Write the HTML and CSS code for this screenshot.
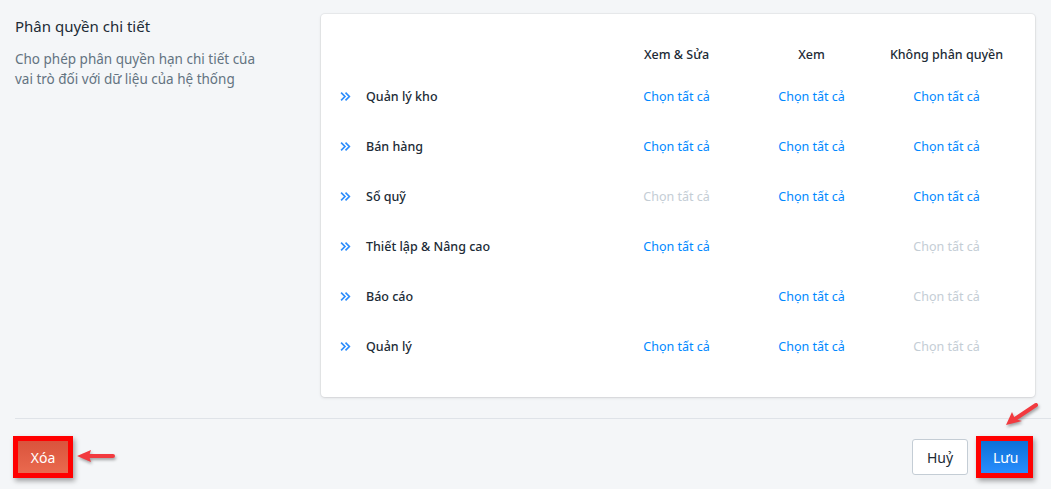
FILE: index.html
```html
<html lang="vi">
	<head>
		<meta charset="UTF-8">
		<meta name="viewport" content="width=device-width, initial-scale=1.0">
		<title>Phân quyền chi tiết</title>
		<link rel="stylesheet" href="styles.css">
	</head>
	<body>
		<div class="layout">
			<div class="aside">
				<h2 class="aside-title">Phân quyền chi tiết</h2>
				<p class="aside-desc">Cho phép phân quyền hạn chi tiết của vai trò đối với dữ liệu của hệ thống</p>
			</div>
			<div class="card">
				<div class="perm-row perm-head">
					<div class="perm-name"></div>
					<div class="perm-col">Xem &amp; Sửa</div>
					<div class="perm-col">Xem</div>
					<div class="perm-col">Không phân quyền</div>
				</div>
				<div class="perm-row">
					<div class="perm-name"><svg class="chev" viewBox="0 0 10 10"><polyline points="1,1.5 4.5,5 1,8.5"/><polyline points="5,1.5 8.5,5 5,8.5"/></svg>Quản lý kho</div>
					<a class="perm-col link" href="#">Chọn tất cả</a>
					<a class="perm-col link" href="#">Chọn tất cả</a>
					<a class="perm-col link" href="#">Chọn tất cả</a>
				</div>
				<div class="perm-row">
					<div class="perm-name"><svg class="chev" viewBox="0 0 10 10"><polyline points="1,1.5 4.5,5 1,8.5"/><polyline points="5,1.5 8.5,5 5,8.5"/></svg>Bán hàng</div>
					<a class="perm-col link" href="#">Chọn tất cả</a>
					<a class="perm-col link" href="#">Chọn tất cả</a>
					<a class="perm-col link" href="#">Chọn tất cả</a>
				</div>
				<div class="perm-row">
					<div class="perm-name"><svg class="chev" viewBox="0 0 10 10"><polyline points="1,1.5 4.5,5 1,8.5"/><polyline points="5,1.5 8.5,5 5,8.5"/></svg>Sổ quỹ</div>
					<span class="perm-col link disabled">Chọn tất cả</span>
					<a class="perm-col link" href="#">Chọn tất cả</a>
					<a class="perm-col link" href="#">Chọn tất cả</a>
				</div>
				<div class="perm-row">
					<div class="perm-name"><svg class="chev" viewBox="0 0 10 10"><polyline points="1,1.5 4.5,5 1,8.5"/><polyline points="5,1.5 8.5,5 5,8.5"/></svg>Thiết lập &amp; Nâng cao</div>
					<a class="perm-col link" href="#">Chọn tất cả</a>
					<span class="perm-col"></span>
					<span class="perm-col link disabled">Chọn tất cả</span>
				</div>
				<div class="perm-row">
					<div class="perm-name"><svg class="chev" viewBox="0 0 10 10"><polyline points="1,1.5 4.5,5 1,8.5"/><polyline points="5,1.5 8.5,5 5,8.5"/></svg>Báo cáo</div>
					<span class="perm-col"></span>
					<a class="perm-col link" href="#">Chọn tất cả</a>
					<span class="perm-col link disabled">Chọn tất cả</span>
				</div>
				<div class="perm-row">
					<div class="perm-name"><svg class="chev" viewBox="0 0 10 10"><polyline points="1,1.5 4.5,5 1,8.5"/><polyline points="5,1.5 8.5,5 5,8.5"/></svg>Quản lý</div>
					<a class="perm-col link" href="#">Chọn tất cả</a>
					<a class="perm-col link" href="#">Chọn tất cả</a>
					<span class="perm-col link disabled">Chọn tất cả</span>
				</div>
			</div>
		</div>

		<div class="footer">
			<button class="btn btn-danger marked" type="button">Xóa</button>
			<div class="footer-right">
				<button class="btn btn-default" type="button">Huỷ</button>
				<button class="btn btn-primary marked" type="button">Lưu</button>
			</div>
		</div>

		<!-- annotation arrows -->
		<svg class="arrow arrow-left" viewBox="0 0 40 16">
			<path d="M38 8 L14 8" />
			<polygon points="2,8 16,2 14,8 16,14" />
		</svg>
		<svg class="arrow arrow-right" viewBox="0 0 36 26">
			<path d="M33 3 L12 17" />
			<polygon points="3,23 9,10 12,17 19,19" />
		</svg>
	</body>
</html>
```

FILE: styles.css
```css
body {
    background-color: #f4f6f8;
    color: #212b36;
    font-family: "Noto Sans", "Open Sans", sans-serif;
    font-size: 12.5px;
    margin: 0;
    position: relative;
    min-height: 489px;
}
.layout {
    display: flex;
    padding: 14px 16px 0 15px;
}
.aside {
    width: 306px;
    flex-shrink: 0;
}
.aside-title {
    font-size: 15px;
    font-weight: 400;
    margin: 2px 0 0 0;
    line-height: 20px;
}
.aside-desc {
    color: #637381;
    font-size: 13.5px;
    line-height: 20px;
    margin: 13px 0 0 0;
    width: 250px;
}
.card {
    background-color: white;
    border-radius: 4px;
    box-shadow: 0 0 0 1px rgba(63,63,68,.05), 0 1px 3px 0 rgba(63,63,68,.15);
    flex: 1;
    padding: 23px 21px 26px 19px;
}
.perm-row {
    display: flex;
    align-items: center;
    height: 50px;
}
.perm-head {
    height: 34px;
    font-weight: 500;
}
.perm-name {
    flex: 1;
    display: flex;
    align-items: center;
    font-weight: 500;
}
.chev {
    width: 11px;
    height: 11px;
    margin-right: 15px;
    fill: none;
    stroke: #2c8dfc;
    stroke-width: 1.5;
}
.perm-col {
    width: 135px;
    text-align: center;
}
.link {
    color: #0088ff;
    text-decoration: none;
}
.link.disabled {
    color: #c4cdd5;
}
.footer {
    border-top: 1px solid #dfe3e8;
    margin: 21px 0 0 15px;
    padding: 20px 21px 0 1px;
    display: flex;
    justify-content: space-between;
}
.footer-right {
    display: flex;
    gap: 11px;
}
.btn {
    font-family: inherit;
    font-size: 14px;
    height: 36px;
    border-radius: 3px;
    cursor: pointer;
    padding: 0 13px;
}
.btn-danger {
    background: linear-gradient(#d9533c, #ea6a4f);
    border: 1px solid #c24a35;
    color: white;
    width: 54px;
}
.btn-default {
    background: white;
    border: 1px solid #c4cdd5;
    color: #212b36;
    width: 56px;
}
.btn-primary {
    background: linear-gradient(#0c6fd6, #2a8fff);
    border: 1px solid #0a64c4;
    color: white;
    width: 51px;
}
.marked {
    border-radius: 0;
    outline: 5px solid #ff0000;
    outline-offset: -2px;
    box-shadow: 2px 3px 5px 3px rgba(0,0,0,.35);
}
.arrow {
    position: absolute;
    filter: drop-shadow(1px 2px 1.5px rgba(0,0,0,.35));
}
.arrow path {
    stroke: #f23a3f;
    stroke-width: 4;
    stroke-linecap: round;
    fill: none;
}
.arrow polygon {
    fill: #f23a3f;
}
.arrow-left {
    left: 75px;
    top: 448px;
    width: 40px;
    height: 16px;
}
.arrow-right {
    left: 1003px;
    top: 402px;
    width: 36px;
    height: 26px;
}
```
